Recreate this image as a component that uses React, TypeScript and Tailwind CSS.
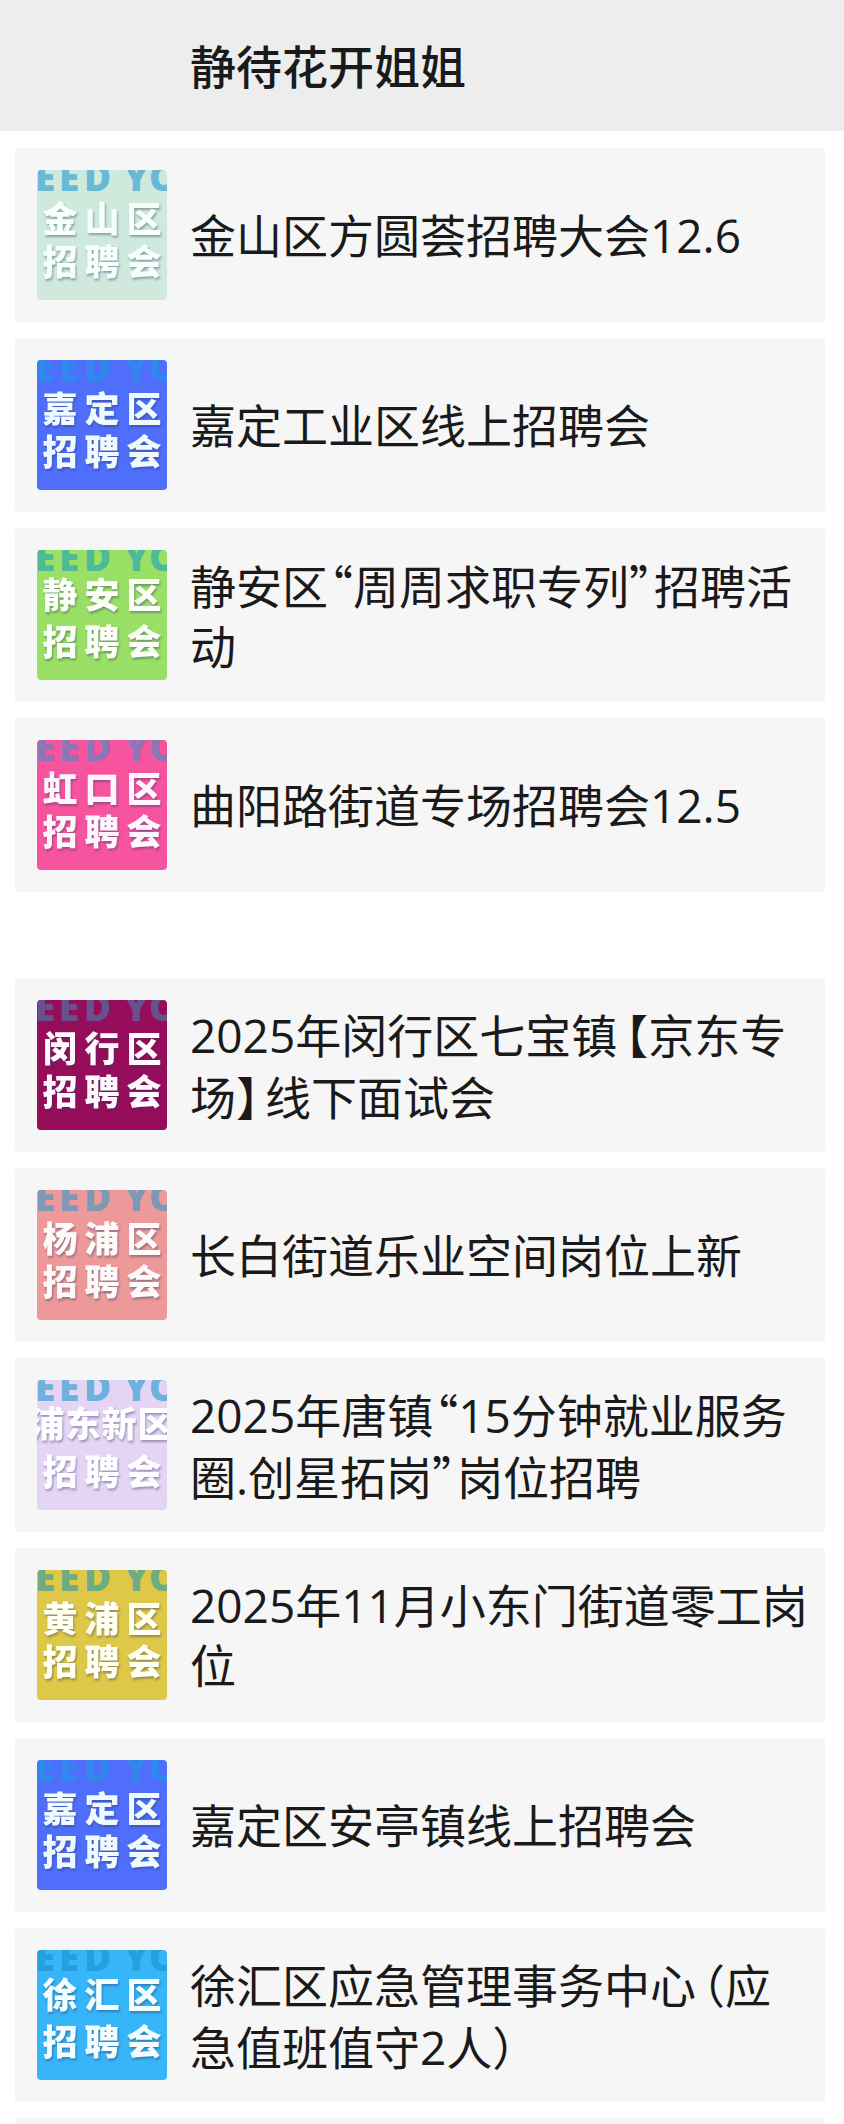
import React from 'react';

type District = {
  name: string;
  background: string;
  banner: string;
  ink: string;
  nameY: number;
};

type Post = { title: string; district: District };

const districts: Record<string, District> = {
  jinshan: { name: '金山区', background: '#cfeadd', banner: '#69b9d6', ink: '#f6fffc', nameY: 62 },
  jiading: { name: '嘉定区', background: '#4f6efb', banner: '#3087ec', ink: '#effaff', nameY: 62 },
  jingan: { name: '静安区', background: '#9ae066', banner: '#4dba98', ink: '#fbfff8', nameY: 58 },
  hongkou: { name: '虹口区', background: '#f7549f', banner: '#8c76b6', ink: '#fff5fd', nameY: 62 },
  minhang: { name: '闵行区', background: '#960d5b', banner: '#66528f', ink: '#fff8fd', nameY: 62 },
  yangpu: { name: '杨浦区', background: '#ed999a', banner: '#7d99b5', ink: '#fffafa', nameY: 62 },
  pudong: { name: '浦东新区', background: '#e5d5f5', banner: '#6eb1de', ink: '#fefdff', nameY: 57 },
  huangpu: { name: '黄浦区', background: '#dfc748', banner: '#6dac84', ink: '#fffff2', nameY: 62 },
  xuhui: { name: '徐汇区', background: '#36b5f9', banner: '#25a0dd', ink: '#f3fdff', nameY: 58 },
};

const recentPosts: Post[] = [
  { title: '金山区方圆荟招聘大会12.6', district: districts.jinshan },
  { title: '嘉定工业区线上招聘会', district: districts.jiading },
  { title: '静安区“周周求职专列”招聘活动', district: districts.jingan },
  { title: '曲阳路街道专场招聘会12.5', district: districts.hongkou },
];

const earlierPosts: Post[] = [
  { title: '2025年闵行区七宝镇【京东专场】线下面试会', district: districts.minhang },
  { title: '长白街道乐业空间岗位上新', district: districts.yangpu },
  { title: '2025年唐镇“15分钟就业服务圈.创星拓岗”岗位招聘', district: districts.pudong },
  { title: '2025年11月小东门街道零工岗位', district: districts.huangpu },
  { title: '嘉定区安亭镇线上招聘会', district: districts.jiading },
  { title: '徐汇区应急管理事务中心（应急值班值守2人）', district: districts.xuhui },
];

function Cover({ district }: { district: District }) {
  const nameX = district.name.length === 4 ? '10 46 82 118' : '23 65 107';
  return (
    <svg
      viewBox="0 0 130 130"
      className="size-[130px] shrink-0 rounded-[4px] font-['Noto_Sans_CJK_SC',sans-serif]"
      aria-hidden="true"
    >
      <rect width="130" height="130" fill={district.background} />
      <text
        x="-2 22 47 87 112"
        y="21"
        fontSize="37"
        fontWeight="800"
        fill={district.banner}
        className="font-['Open_Sans',sans-serif]"
      >
        EEDYO
      </text>
      <g
        fontSize="35"
        fontWeight="900"
        fill={district.ink}
        textAnchor="middle"
        className="[filter:drop-shadow(1px_2px_1px_rgba(40,50,90,0.4))]"
      >
        <text x={nameX} y={district.nameY}>{district.name}</text>
        <text x="23 65 107" y="105">招聘会</text>
      </g>
    </svg>
  );
}

const outerGap: Record<string, string> = {
  '“': 'ml-0.5',
  '”': 'mr-0.5',
  '【': 'ml-2',
  '】': 'mr-1.5',
  '（': 'ml-1.5',
  '）': 'mr-1.5',
};

/* Sets brackets and quotes at half width, with a little air on their outer side. */
function Title({ text }: { text: string }) {
  return (
    <span className="min-w-0 flex-1">
      {text.split(/([“”【】（）])/).map((part, i) =>
        part in outerGap ? (
          <span
            key={i}
            className={`${outerGap[part]} font-['Noto_Sans_CJK_SC',sans-serif] [font-feature-settings:'halt']`}
          >
            {part}
          </span>
        ) : (
          <React.Fragment key={i}>{part}</React.Fragment>
        ),
      )}
    </span>
  );
}

function PostList({ posts, children }: { posts: Post[]; children?: React.ReactNode }) {
  return (
    <ul className="flex flex-col gap-4">
      {posts.map((post) => (
        <li key={post.title}>
          <a
            href="#"
            className="flex items-center gap-[23px] rounded-[3px] bg-[#f6f6f6] py-[22px] pr-[15px] pl-[22px] text-[46px] leading-[60px]"
          >
            <Cover district={post.district} />
            <Title text={post.title} />
          </a>
        </li>
      ))}
      {children}
    </ul>
  );
}

export default function App() {
  return (
    <div
      lang="zh-CN"
      className="h-screen overflow-y-auto bg-white font-['Open_Sans','Noto_Sans_CJK_SC',sans-serif] text-[#1a1a1a] [scrollbar-width:none]"
    >
      <header className="bg-[#ededed] pt-9 pb-[35px] pl-[190px]">
        <h1 className="text-[46px] leading-[60px] font-medium">静待花开姐姐</h1>
      </header>
      <main className="flex flex-col gap-[86px] pt-[17px] pr-[19px] pl-[15px]">
        <PostList posts={recentPosts} />
        <PostList posts={earlierPosts}>
          <li className="h-[174px] rounded-[3px] bg-[#f6f6f6]" />
        </PostList>
      </main>
    </div>
  );
}
